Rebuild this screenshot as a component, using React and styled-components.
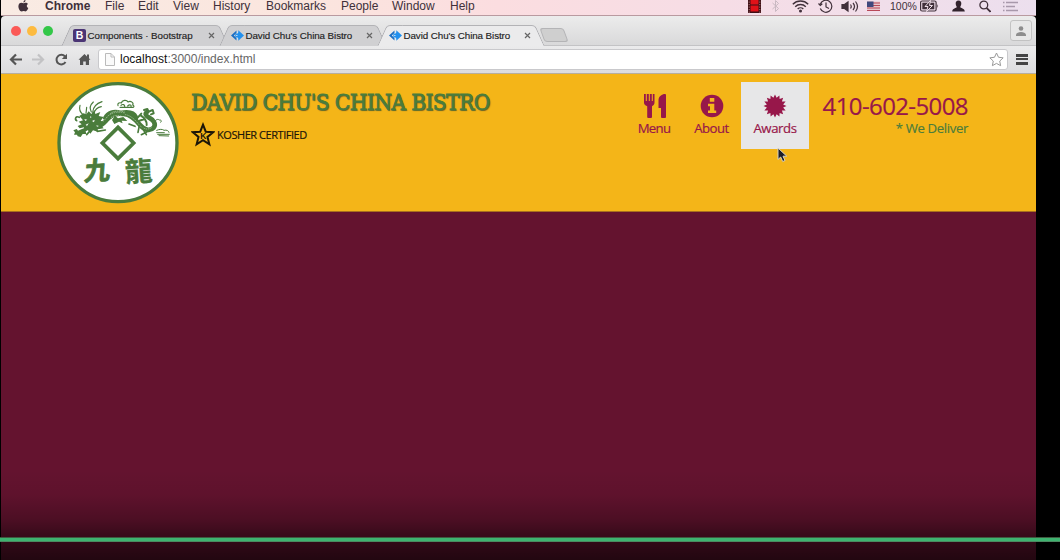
import React from 'react';
import styled, { createGlobalStyle, css } from 'styled-components';

const GREEN = '#4a7c3c';
const WINE = '#97174a';
const GOLD = '#f4b518';

const Global = createGlobalStyle`
  * { box-sizing: border-box; }
  body { margin: 0; background: #000; overflow: hidden; }
`;

const Frame = styled.div`
  position: relative;
  width: 1060px;
  height: 560px;
  padding-left: 1px;
  background: #000;
  overflow: hidden;
  font-family: 'Liberation Sans', Arial, sans-serif;
`;

const Desktop = styled.div`
  display: flex;
  flex-direction: column;
  width: 1035px;
  height: 560px;
`;

const MenuBar = styled.div`
  display: flex;
  align-items: center;
  height: 16px;
  padding: 0 18px 4px 17px;
  background: linear-gradient(90deg, #f9ebe3 0%, #fbe5de 30%, #fbdde0 48%, #f6dde6 70%, #ecdfee 100%);
  border-bottom: 1px solid #b99aa0;
  color: #40303a;
  font-size: 12px;
  line-height: 12px;
`;

const MenuItem = styled.span`
  flex: none;
  width: ${(p) => p.$w}px;
  font-weight: ${(p) => (p.$bold ? 700 : 400)};
  white-space: nowrap;
`;

const Apple = styled.svg`
  flex: none;
  width: 11px;
  height: 12px;
  margin-right: 16px;
`;

const StatusArea = styled.div`
  display: flex;
  align-items: center;
  margin-left: auto;
`;

const StatusIcon = styled.svg`
  flex: none;
  display: block;
  width: ${(p) => p.$w}px;
  height: 14px;
  margin-left: ${(p) => p.$gap}px;
`;

const Percent = styled.span`
  margin-left: 10px;
  width: 27px;
  font-size: 10.5px;
  white-space: nowrap;
`;

const TabStrip = styled.div`
  display: flex;
  height: 30px;
  padding: 9px 4px 0 9.5px;
  background: linear-gradient(#ececec, #d9d9da);
  border-radius: 4px 4px 0 0;
  border-bottom: 1px solid #c3c3c5;
`;

const Lights = styled.div`
  display: flex;
  gap: 6px;
  width: 50.5px;
  padding-top: 1px;
`;

const Light = styled.span`
  width: 10px;
  height: 10px;
  border-radius: 50%;
  background: ${(p) => p.$color};
`;

const tabSide = css`
  content: '';
  position: absolute;
  z-index: -1;
  top: 0;
  bottom: -1px;
  background: ${(p) => (p.$active ? '#ebebec' : '#d0d0d2')};
  border-top: 1px solid #b3b3b6;
`;

const Tab = styled.div`
  position: relative;
  z-index: ${(p) => (p.$active ? 2 : 1)};
  display: flex;
  align-items: center;
  flex: none;
  width: 168px;
  height: 20px;
  margin-right: -10px;
  padding: 0 11px 0 12px;
  color: #222;
  font-size: 9.8px;
  &::before {
    ${tabSide}
    left: 5px;
    right: 30px;
    border-left: 1px solid #a9a9ad;
    border-top-left-radius: 4px;
    transform: skewX(-24deg);
  }
  &::after {
    ${tabSide}
    left: 30px;
    right: 5px;
    border-right: 1px solid #a9a9ad;
    border-top-right-radius: 4px;
    transform: skewX(24deg);
  }
`;

const TabTitle = styled.span`
  flex: 1;
  margin-left: 1.500px;
  letter-spacing: ${(p) => p.$track}px;
  white-space: nowrap;
  -webkit-text-stroke: 0.15px #222;
`;

const TabIcon = styled.svg`
  flex: none;
  width: 13px;
  height: 13px;
`;

const TabClose = styled.svg`
  flex: none;
  width: 7px;
  height: 7px;
  margin-right: 3px;
`;

const NewTab = styled.div`
  width: 24px;
  height: 14px;
  margin: 3px 0 0 7px;
  background: #cfcfcf;
  border: 1px solid #b4b4b6;
  border-radius: 3px;
  transform: skewX(20deg);
`;

const ProfileButton = styled.div`
  display: flex;
  align-items: center;
  justify-content: center;
  width: 22px;
  height: 21px;
  margin: -5px 0 0 auto;
  background: #e8e8e8;
  border: 1px solid #c2c2c2;
  border-radius: 3px;
`;

const Toolbar = styled.div`
  display: flex;
  align-items: center;
  height: 28px;
  padding: 0 8px 1px 7.5px;
  background: linear-gradient(#ebebec, #dcdcde);
  border-bottom: 1px solid #b7ae9d;
`;

const NavIcon = styled.svg`
  flex: none;
  width: 13px;
  height: 13px;
  margin-right: ${(p) => p.$gap}px;
`;

const Address = styled.div`
  display: flex;
  align-items: center;
  flex: 1;
  height: 21px;
  padding: 0 3px 0 6px;
  background: #fff;
  border: 1px solid #c9c9cc;
  border-radius: 3px;
`;

const Url = styled.span`
  flex: 1;
  margin-left: 5.500px;
  color: #666;
  font-size: 12px;
  b { color: #111; font-weight: 400; }
`;

const Burger = styled.div`
  width: 12px;
  height: 11px;
  margin-left: 8px;
  border-top: 3px solid #444;
  border-bottom: 3px solid #444;
  display: flex;
  align-items: center;
  &::before {
    content: '';
    width: 12px;
    height: 2px;
    background: #444;
  }
`;

const SiteHeader = styled.header`
  display: flex;
  align-items: flex-start;
  height: 138px;
  padding: 0 68px 0 49px;
  background: ${GOLD};
  border-bottom: 1px solid #a8701f;
  font-family: 'Open Sans', 'Noto Sans', sans-serif;
`;

const Logo = styled.svg`
  flex: none;
  width: 140px;
  height: 137px;
`;

const Brand = styled.div`
  margin-left: 1px;
  padding-top: 14px;
`;

const BrandName = styled.h1`
  margin: 0;
  color: ${GREEN};
  font-family: 'DejaVu Serif Condensed', 'DejaVu Serif', serif;
  font-stretch: condensed;
  font-size: 22.500px;
  font-weight: 400;
  line-height: 28px;
  letter-spacing: -0.6px;
  white-space: nowrap;
  -webkit-text-stroke: 0.8px ${GREEN};
  text-shadow: 1px 1px 1px #7a5a20;
`;

const Kosher = styled.p`
  display: flex;
  align-items: center;
  gap: 2px;
  margin: 6px 0 0;
  color: #1c1608;
  font-size: 11px;
  line-height: 26px;
  letter-spacing: -0.45px;
  white-space: nowrap;
  -webkit-text-stroke: 0.2px #1c1608;
`;

const Nav = styled.nav`
  display: flex;
  margin: 8px 12px 0 auto;
`;

const NavLink = styled.a`
  display: flex;
  flex-direction: column;
  align-items: center;
  width: ${(p) => p.$w}px;
  height: 67px;
  padding-top: 12px;
  background: ${(p) => (p.$hover ? '#e7e7e8' : 'transparent')};
  color: ${WINE};
  font-size: 13.2px;
  line-height: 18px;
  letter-spacing: ${(p) => p.$track}px;
  -webkit-text-stroke: 0.2px ${WINE};
  svg { display: block; width: 24px; height: 24px; margin-bottom: 1px; }
`;

const Contact = styled.div`
  width: 147px;
  padding-top: 18px;
  text-align: right;
  white-space: nowrap;
`;

const Phone = styled.div`
  color: ${WINE};
  font-size: 24px;
  line-height: 28px;
  letter-spacing: -0.6px;
  -webkit-text-stroke: 0.2px ${WINE};
`;

const Deliver = styled.div`
  color: ${GREEN};
  font-size: 13.2px;
  line-height: 16px;
  letter-spacing: -0.37px;
  -webkit-text-stroke: 0.15px ${GREEN};
`;

const PageBody = styled.main`
  flex: 1;
  background: #64132f;
`;

const Shade = styled.div`
  position: absolute;
  left: 0;
  right: 0;
  bottom: 0;
  height: 90px;
  background: linear-gradient(rgba(0,0,0,0) 0%, rgba(0,0,0,0.06) 28%, rgba(0,0,0,0.24) 55%, rgba(0,0,0,0.5) 78%, rgba(0,0,0,0.66) 100%);
`;

const Progress = styled.div`
  position: absolute;
  left: 0;
  right: 0;
  top: 537px;
  height: 5px;
  background: #3eb370;
  border-top: 1px solid #3f5a40;
  border-bottom: 1px solid #4b8a60;
`;

const Pointer = styled.svg`
  position: absolute;
  left: 776px;
  top: 147px;
  width: 12px;
  height: 16px;
`;

const starPoints = (n, cx, cy, outer, inner) =>
  Array.from({ length: n * 2 }, (_, i) => {
    const r = i % 2 ? inner : outer;
    const a = (Math.PI * i) / n - Math.PI / 2;
    return `${(cx + r * Math.cos(a)).toFixed(2)},${(cy + r * Math.sin(a)).toFixed(2)}`;
  }).join(' ');

const Close = () => (
  <TabClose viewBox="0 0 7 7">
    <path d="M1 1l5 5M6 1l-5 5" stroke="#666" strokeWidth="1.2" />
  </TabClose>
);

const BootstrapIcon = () => (
  <TabIcon viewBox="0 0 13 13">
    <rect width="13" height="13" rx="2" fill="#4b3575" />
    <text x="6.5" y="10.3" textAnchor="middle" fontFamily="Liberation Sans" fontWeight="700" fontSize="10.5" fill="#fff">B</text>
  </TabIcon>
);

const SyncIcon = () => (
  <TabIcon viewBox="0 0 13 13">
    <path d="M5.500 1.500L0 6.500l5.500 5V9L2.800 6.500 5.500 4z" fill="#1b6fc4" />
    <path d="M7.300 1.200L13 6.500l-5.700 5.300V9.500L4.300 7.800V5.200l3-1.700z" fill="#2190ee" />
    <path d="M6.400 2.500v2M6.400 8.500v2M5 6.500h1.500" stroke="#dcecf8" strokeWidth=".8" />
  </TabIcon>
);

const DragonLogo = () => (
  <Logo viewBox="0 0 420 411">
    <circle cx="204" cy="206" r="177" fill="#fff" stroke={GREEN} strokeWidth="10" />
    <g fill="none" stroke={GREEN} strokeLinecap="round" strokeLinejoin="round">
      <path d="M118 154c20 12 36 2 50-14 13-17 32-24 54-20 20 2 32 14 46 31 14 17 32 22 43 10 9-12-2-24-15-31-9-5-12-10-5-16" strokeWidth="14" />
      <path d="M166 132c8-16 26-22 46-15 22-4 40 0 45 12" strokeWidth="14" />
      <path d="M134 148c18 6 28-8 40-22 14-12 32-14 50-9M226 122c16 2 30 16 42 31 12 13 28 16 38 6" strokeWidth="2.500" strokeDasharray="2 5" stroke="#a9c49f" />
      <path d="M182 118c12-9 29-8 41-4M184 130c10-7 24-6 34-2" strokeWidth="2.500" strokeDasharray="2 5" stroke="#b4cbac" />
      <path d="M204 95c-3-8 6-10 10-8 2-9 16-11 20-3 9-5 18 3 14 9 4 1 5 5 2 7h-40M213 94c5-5 12-2 11 4M233 96c6-6 12-3 10 2" strokeWidth="3.500" />
      <path d="M315 143c2-8 10-8 13-5 6-2 8 6 4 7M320 169c8-4 18-4 22 0 8-2 14 1 15 6M323 181h35M320 176h23M327 185l29 1" strokeWidth="3" />
      <path d="M90 94c-3 11 0 20 8 27M110 100l-2 18M130 84c-10 9-12 19-6 30M156 83c-18 6-27 18-28 32M154 98c-13 2-20 12-23 21" strokeWidth="3.500" />
      <path d="M88 130c-12-6-14 6-8 10M142 172l24-4M124 166l-14 16M237 150l18 7M268 155l-4 20M277 162l12 20M290 174l-16 8" strokeWidth="5" />
      <path d="M282 108l10-3 4 8 12-5 3 10-8 3M272 124c11 7 19 14 18 29M274 119l-13 14M282 136l-14 4" strokeWidth="6" />
    </g>
    <g fill={GREEN}>
      <path d="M88 126l12-8 9 3 7-9 8 8 10-11 2 11 15-6-5 12 15 3-9 11 12 5-10 10 7 8-18 3 2 8-16-5-8 10-8-12-13 6 2-13-13 3-6-7 12-5-9-8 13-4z" />
      <path d="M70 169l10-4 4 5 12-5 9-3 12-4 2 8-12 6 2 8-11 0-6 9-9-2-2-5-9 0 3-7z" />
      <path d="M186 138l9-13 9 8 16-4 12 12-17-1 3 8-11-5-14 7z" />
    </g>
    <g fill="#fff">
      <path d="M103 135l9 2-6 4zM126 141l8-4-2 8zM107 152l9-4-5 8zM120 127l5 2-4 3zM139 154l8 2-6 2z" />
    </g>
    <path d="M204 160l47 47-47 47-47-47z" fill="#fff" stroke={GREEN} strokeWidth="11" />
    <g fill={GREEN} stroke={GREEN} strokeWidth="2.500" strokeLinejoin="round" fontFamily="'Noto Sans CJK TC', 'Noto Sans CJK JP', sans-serif" fontWeight="700">
      <text fontSize="78" transform="translate(101 320) rotate(-4) skewX(-8)">九</text>
      <text strokeWidth="1" fontSize="82" transform="translate(227 325) rotate(-4)">龍</text>
    </g>
  </Logo>
);

export default function App() {
  return (
    <Frame>
      <Global />
      <Desktop>
        <MenuBar>
          <Apple viewBox="0 0 11 12" fill="#40303a">
            <path d="M7.500 0c.1 1.300-.9 2.500-2.100 2.500C5.300 1.300 6.300.2 7.500 0zM9.900 4C8.200 5 8.500 7.300 10.300 8 9.700 9.700 8.700 11.400 7.600 11.400c-.8 0-1.100-.4-2-.4s-1.300.4-2 .4C1.900 11.400.4 8.500.4 6.200.4 3.900 1.900 2.800 3.300 2.800c.9 0 1.700.5 2.200.5s1.500-.6 2.600-.5c.7 0 1.400.4 1.800 1.200z" />
          </Apple>
          <MenuItem $w={60} $bold>Chrome</MenuItem>
          <MenuItem $w={33}>File</MenuItem>
          <MenuItem $w={35}>Edit</MenuItem>
          <MenuItem $w={40}>View</MenuItem>
          <MenuItem $w={53}>History</MenuItem>
          <MenuItem $w={75}>Bookmarks</MenuItem>
          <MenuItem $w={51}>People</MenuItem>
          <MenuItem $w={58}>Window</MenuItem>
          <MenuItem $w={28}>Help</MenuItem>
          <StatusArea>
            <StatusIcon $w={13} $gap={0} viewBox="0 0 13 14">
              <rect width="13" height="14" fill="#3c0f14" />
              <rect x="2.500" width="8" height="5.500" fill="#e01218" />
              <rect x="2.500" y="6.500" width="8" height="6" fill="#e01218" />
              <path d="M1.200 0v14M11.800 0v14" stroke="#c98f93" strokeWidth=".8" strokeDasharray="1.200 1.300" />
            </StatusIcon>
            <StatusIcon $w={9} $gap={10} viewBox="0 0 9 14">
              <path d="M1.500 4l6 5.500-3 3V1.500l3 3-6 5.500" fill="none" stroke="#c9b9c2" />
            </StatusIcon>
            <StatusIcon $w={17} $gap={12} viewBox="0 0 17 14" fill="none" stroke="#40303a" strokeWidth="1.400">
              <path d="M.8 5.200a11 11 0 0 1 15.400 0M3.200 7.700a7.600 7.600 0 0 1 10.600 0M5.700 10a4 4 0 0 1 5.600 0" />
              <circle cx="8.500" cy="12" r=".8" fill="#40303a" />
            </StatusIcon>
            <StatusIcon $w={15} $gap={9} viewBox="0 0 15 14" fill="none" stroke="#40303a" strokeWidth="1.200">
              <path d="M2.300 9.500A6 6 0 1 0 2.300 5M8 3.500V8l3 1.500M.5 4.500l1.800 2 2-1.800" />
            </StatusIcon>
            <StatusIcon $w={18} $gap={8} viewBox="0 0 18 14" fill="none" stroke="#40303a" strokeWidth="1.200">
              <path d="M1 5.500h2.500L7 3v9L3.500 9.500H1z" fill="#40303a" />
              <path d="M9.500 5.500q1.500 2 0 4M12 4q3 3.500 0 7M14.500 2.500q4 5 0 10" />
            </StatusIcon>
            <StatusIcon $w={13} $gap={8} viewBox="0 0 13 14">
              <rect y="2.500" width="13" height="9.500" fill="#e8c5cc" />
              <path d="M0 4h13M0 6.500h13M0 9h13M0 11.500h13" stroke="#b84858" strokeWidth="1.200" />
              <rect y="2.500" width="6.500" height="5.500" fill="#3f477c" />
            </StatusIcon>
            <Percent>100%</Percent>
            <StatusIcon $w={19} $gap={3} viewBox="0 0 19 14">
              <rect x=".6" y="2" width="15.500" height="10" rx="1.500" fill="none" stroke="#40303a" strokeWidth="1.200" />
              <rect x="2.300" y="3.700" width="12" height="6.600" fill="#40303a" />
              <path d="M17.300 5q1.600 2 0 4z" fill="#40303a" />
              <path d="M10.500 1.500L5 7.500h3L6.500 12.500l6-6h-3z" fill="#40303a" stroke="#f0dfe9" strokeWidth="1" />
            </StatusIcon>
            <StatusIcon $w={13} $gap={13} viewBox="0 0 13 14" fill="#32232d">
              <path d="M6.500 1.500c2 0 3 1.300 2.800 3.200C9.100 6.500 8.500 7 8.300 8c0 1.300 4.500 1.200 4.500 4.500H.2C.2 9.200 4.700 9.300 4.700 8c-.2-1-.8-1.500-1-3.300C3.500 2.800 4.500 1.500 6.500 1.500z" />
            </StatusIcon>
            <StatusIcon $w={12} $gap={14} viewBox="0 0 12 14" fill="none" stroke="#40303a" strokeWidth="1.300">
              <circle cx="4.800" cy="6" r="3.900" />
              <path d="M7.500 8.800l4 4" strokeWidth="1.700" />
            </StatusIcon>
            <StatusIcon $w={15} $gap={12} viewBox="0 0 15 14" stroke="#a898ab" strokeWidth="1.300">
              <path d="M0 3.500h1.500M3 3.500h12M0 7.500h1.500M3 7.500h9M0 11.500h1.500M3 11.500h12" />
            </StatusIcon>
          </StatusArea>
        </MenuBar>

        <TabStrip>
          <Lights>
            <Light $color="#fb5a57" />
            <Light $color="#fdbb40" />
            <Light $color="#33c748" />
          </Lights>
          <Tab>
            <BootstrapIcon />
            <TabTitle $track={-0.05}>Components · Bootstrap</TabTitle>
            <Close />
          </Tab>
          <Tab>
            <SyncIcon />
            <TabTitle $track={-0.08}>David Chu's China Bistro</TabTitle>
            <Close />
          </Tab>
          <Tab $active>
            <SyncIcon />
            <TabTitle $track={-0.08}>David Chu's China Bistro</TabTitle>
            <Close />
          </Tab>
          <NewTab />
          <ProfileButton>
            <svg width="10" height="10" viewBox="0 0 10 10" fill="#8e8e8e">
              <circle cx="5" cy="2.500" r="2.300" />
              <path d="M0 10V8.500Q1 6 5 6t5 2.500V10z" />
            </svg>
          </ProfileButton>
        </TabStrip>

        <Toolbar>
          <NavIcon $gap={10} viewBox="0 0 13 13" fill="none" stroke="#555" strokeWidth="2.200">
            <path d="M13 6.500H2M7 1.500l-5 5 5 5" />
          </NavIcon>
          <NavIcon $gap={10} viewBox="0 0 13 13" fill="none" stroke="#c2c2c4" strokeWidth="2.200">
            <path d="M0 6.500h11M6 1.500l5 5-5 5" />
          </NavIcon>
          <NavIcon $gap={10} viewBox="0 0 13 13">
            <path d="M10.500 9A4.800 4.800 0 1 1 10 3.500" fill="none" stroke="#555" strokeWidth="2" />
            <path d="M12 .8V6H6.800z" fill="#555" />
          </NavIcon>
          <NavIcon $gap={7} viewBox="0 0 13 13" fill="#555">
            <path d="M6.500 1L9 3.400V1.500h2v3.800l1.500 1.500H11V12H7.800V8.500H5.200V12H2V6.800H.5z" />
          </NavIcon>
          <Address>
            <svg width="10" height="13" viewBox="0 0 10 13" fill="#fafafa" stroke="#bbb">
              <path d="M.5.500h5.500l3.500 3.500v8.500h-9zM6 .5V4h3.500" />
            </svg>
            <Url><b>localhost</b>:3000/index.html</Url>
            <svg width="15" height="15" viewBox="0 0 15 15">
              <polygon points={starPoints(5, 7.5, 8, 7, 3.4)} fill="#fff" stroke="#999" strokeWidth="1" strokeLinejoin="round" />
            </svg>
          </Address>
          <Burger />
        </Toolbar>

        <SiteHeader>
          <DragonLogo />
          <Brand>
            <BrandName>DAVID CHU'S CHINA BISTRO</BrandName>
            <Kosher>
              <svg width="24" height="26" viewBox="0 0 24 26">
                <polygon points={starPoints(5, 12, 13.5, 10.8, 4.7)} fill="none" stroke="#1c1608" strokeWidth="2" />
                <text x="12" y="17" textAnchor="middle" fontFamily="Liberation Sans" fontWeight="700" fontSize="8.500" fill="#1c1608">K</text>
              </svg>
              KOSHER CERTIFIED
            </Kosher>
          </Brand>
          <Nav>
            <NavLink $w={56} $track={-0.7}>
              <svg viewBox="-1 0 24 24" fill={WINE}>
                <path d="M1 0h1.800v7h1V0h2v7h1V0h2v7h1V0h1.700v8.500c0 2-1 3-2.500 3.700V23q0 1-1 1H5.200q-1 0-1-1V12.200C2 11.500 1 10.500 1 8.500zM23 1v22q0 1-1 1h-3q-1 0-1-1v-9h-2.500V6C15.500 2.500 19 0 22 0q1 0 1 1z" />
              </svg>
              Menu
            </NavLink>
            <NavLink $w={59} $track={-0.5}>
              <svg viewBox="0 0 24 24">
                <circle cx="12" cy="12" r="11.300" fill={WINE} />
                <path d="M9.800 4h4.500v3.700H9.800zM8 9.800h6.300v6.700h1.900V19H8v-2.500h2v-4.200H8z" fill="#f5b81c" />
              </svg>
              About
            </NavLink>
            <NavLink $w={68} $track={-0.4} $hover>
              <svg viewBox="0 0 24 24" fill={WINE}>
                <polygon points={starPoints(16, 12, 12, 11.5, 8.3)} />
              </svg>
              Awards
            </NavLink>
          </Nav>
          <Contact>
            <Phone>410-602-5008</Phone>
            <Deliver>* We Deliver</Deliver>
          </Contact>
        </SiteHeader>
        <PageBody />
      </Desktop>
      <Shade />
      <Progress />
      <Pointer viewBox="0 0 12 16">
        <path d="M2 1v11.500l2.700-2.500 2 4.500 2.300-1-2-4.300h3.800z" fill="#1c1c28" stroke="#d8d2c2" strokeWidth="1" />
      </Pointer>
    </Frame>
  );
}
